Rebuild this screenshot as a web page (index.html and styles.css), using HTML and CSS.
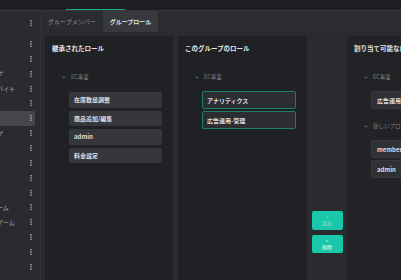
FILE: index.html
```html
<!DOCTYPE html>
<html lang="ja">
<head>
    <meta charset="UTF-8">
    <meta name="viewport" content="width=device-width, initial-scale=1.0">
    <title>グループロール</title>
    <link rel="stylesheet" href="styles.css">
</head>
<body>
    <div class="topbar"><span class="topbar-active"></span></div>

    <div class="layout">
        <!-- group list -->
        <aside class="sidebar">
            <div class="side-row side-head"><span class="side-name">グループ</span><svg class="kebab" viewBox="0 0 2 6"><rect x="0.3" y="0" width="1.4" height="1.3"/><rect x="0.3" y="2.3" width="1.4" height="1.3"/><rect x="0.3" y="4.6" width="1.4" height="1.3"/></svg></div>
            <div class="side-row"><span class="side-name">全社員</span><svg class="kebab" viewBox="0 0 2 6"><rect x="0.3" y="0" width="1.4" height="1.3"/><rect x="0.3" y="2.3" width="1.4" height="1.3"/><rect x="0.3" y="4.6" width="1.4" height="1.3"/></svg></div>
            <div class="side-row"><span class="side-name">管理者</span><svg class="kebab" viewBox="0 0 2 6"><rect x="0.3" y="0" width="1.4" height="1.3"/><rect x="0.3" y="2.3" width="1.4" height="1.3"/><rect x="0.3" y="4.6" width="1.4" height="1.3"/></svg></div>
            <div class="side-row"><span class="side-name">開発グループ</span><svg class="kebab" viewBox="0 0 2 6"><rect x="0.3" y="0" width="1.4" height="1.3"/><rect x="0.3" y="2.3" width="1.4" height="1.3"/><rect x="0.3" y="4.6" width="1.4" height="1.3"/></svg></div>
            <div class="side-row"><span class="side-name">学生・アルバイト</span><svg class="kebab" viewBox="0 0 2 6"><rect x="0.3" y="0" width="1.4" height="1.3"/><rect x="0.3" y="2.3" width="1.4" height="1.3"/><rect x="0.3" y="4.6" width="1.4" height="1.3"/></svg></div>
            <div class="side-row"><span class="side-name">営業部</span><svg class="kebab" viewBox="0 0 2 6"><rect x="0.3" y="0" width="1.4" height="1.3"/><rect x="0.3" y="2.3" width="1.4" height="1.3"/><rect x="0.3" y="4.6" width="1.4" height="1.3"/></svg></div>
            <div class="side-row is-selected"><span class="side-name">EC事業</span><svg class="kebab" viewBox="0 0 2 6"><rect x="0.3" y="0" width="1.4" height="1.3"/><rect x="0.3" y="2.3" width="1.4" height="1.3"/><rect x="0.3" y="4.6" width="1.4" height="1.3"/></svg></div>
            <div class="side-row"><span class="side-name">企画グループ</span><svg class="kebab" viewBox="0 0 2 6"><rect x="0.3" y="0" width="1.4" height="1.3"/><rect x="0.3" y="2.3" width="1.4" height="1.3"/><rect x="0.3" y="4.6" width="1.4" height="1.3"/></svg></div>
            <div class="side-row"><span class="side-name">デザイン</span><svg class="kebab" viewBox="0 0 2 6"><rect x="0.3" y="0" width="1.4" height="1.3"/><rect x="0.3" y="2.3" width="1.4" height="1.3"/><rect x="0.3" y="4.6" width="1.4" height="1.3"/></svg></div>
            <div class="side-row"><span class="side-name">人事部</span><svg class="kebab" viewBox="0 0 2 6"><rect x="0.3" y="0" width="1.4" height="1.3"/><rect x="0.3" y="2.3" width="1.4" height="1.3"/><rect x="0.3" y="4.6" width="1.4" height="1.3"/></svg></div>
            <div class="side-row"><span class="side-name">経理部</span><svg class="kebab" viewBox="0 0 2 6"><rect x="0.3" y="0" width="1.4" height="1.3"/><rect x="0.3" y="2.3" width="1.4" height="1.3"/><rect x="0.3" y="4.6" width="1.4" height="1.3"/></svg></div>
            <div class="side-row"><span class="side-name">サポート</span><svg class="kebab" viewBox="0 0 2 6"><rect x="0.3" y="0" width="1.4" height="1.3"/><rect x="0.3" y="2.3" width="1.4" height="1.3"/><rect x="0.3" y="4.6" width="1.4" height="1.3"/></svg></div>
            <div class="side-row"><span class="side-name">ブラウザゲーム</span><svg class="kebab" viewBox="0 0 2 6"><rect x="0.3" y="0" width="1.4" height="1.3"/><rect x="0.3" y="2.3" width="1.4" height="1.3"/><rect x="0.3" y="4.6" width="1.4" height="1.3"/></svg></div>
            <div class="side-row"><span class="side-name">ソーシャルゲーム</span><svg class="kebab" viewBox="0 0 2 6"><rect x="0.3" y="0" width="1.4" height="1.3"/><rect x="0.3" y="2.3" width="1.4" height="1.3"/><rect x="0.3" y="4.6" width="1.4" height="1.3"/></svg></div>
            <div class="side-row"><span class="side-name">広報</span><svg class="kebab" viewBox="0 0 2 6"><rect x="0.3" y="0" width="1.4" height="1.3"/><rect x="0.3" y="2.3" width="1.4" height="1.3"/><rect x="0.3" y="4.6" width="1.4" height="1.3"/></svg></div>
            <div class="side-row"><span class="side-name">外部委託</span><svg class="kebab" viewBox="0 0 2 6"><rect x="0.3" y="0" width="1.4" height="1.3"/><rect x="0.3" y="2.3" width="1.4" height="1.3"/><rect x="0.3" y="4.6" width="1.4" height="1.3"/></svg></div>
            <div class="side-row"><span class="side-name">テスト</span><svg class="kebab" viewBox="0 0 2 6"><rect x="0.3" y="0" width="1.4" height="1.3"/><rect x="0.3" y="2.3" width="1.4" height="1.3"/><rect x="0.3" y="4.6" width="1.4" height="1.3"/></svg></div>
        </aside>

        <main class="content">
            <nav class="tabs">
                <div class="tab">グループメンバー</div>
                <div class="tab tab-active">グループロール</div>
            </nav>

            <div class="panels">
                <!-- inherited roles -->
                <section class="panel">
                    <div class="panel-title">継承されたロール</div>
                    <div class="group">
                        <div class="group-label"><svg class="chevron" viewBox="0 0 4 3"><path d="M0.4 0.6 L2 2.2 L3.6 0.6"/></svg>EC事業</div>
                        <div class="role-list">
                            <div class="role">在庫数量調整</div>
                            <div class="role">商品追加/編集</div>
                            <div class="role">admin</div>
                            <div class="role">料金設定</div>
                        </div>
                    </div>
                </section>

                <!-- roles of this group -->
                <section class="panel panel-own">
                    <div class="panel-title">このグループのロール</div>
                    <div class="group">
                        <div class="group-label"><svg class="chevron" viewBox="0 0 4 3"><path d="M0.4 0.6 L2 2.2 L3.6 0.6"/></svg>EC事業</div>
                        <div class="role-list">
                            <div class="role role-own">アナリティクス</div>
                            <div class="role role-own">広告運用-管理</div>
                        </div>
                    </div>
                </section>

                <div class="transfer">
                    <button class="move-btn is-muted"><span>&lt;</span><span>追加</span></button>
                    <button class="move-btn"><span>&gt;</span><span>削除</span></button>
                </div>

                <!-- assignable roles -->
                <section class="panel panel-free">
                    <div class="panel-title">割り当て可能なロール</div>
                    <div class="group">
                        <div class="group-label"><svg class="chevron" viewBox="0 0 4 3"><path d="M0.4 0.6 L2 2.2 L3.6 0.6"/></svg>EC事業</div>
                        <div class="role-list">
                            <div class="role role-free">広告運用-閲覧</div>
                        </div>
                    </div>
                    <div class="group">
                        <div class="group-label"><svg class="chevron" viewBox="0 0 4 3"><path d="M0.4 0.6 L2 2.2 L3.6 0.6"/></svg>新しいプロジェクト</div>
                        <div class="role-list">
                            <div class="role role-free">member</div>
                            <div class="role role-free">admin</div>
                        </div>
                    </div>
                </section>
            </div>
        </main>
    </div>
</body>
</html>
```

FILE: styles.css
```css
html, body {
    margin: 0;
    height: 100%;
    overflow: hidden;
}
body {
    background-color: #2a2b2f;
    font-family: "Noto Sans CJK JP", "Noto Sans", sans-serif;
    color: #dedfe2;
}
.topbar {
    height: 10px;
    background-color: #1e1f23;
    display: flex;
    align-items: flex-end;
}
.topbar-active {
    margin-left: 66px;
    width: 59px;
    height: 1px;
    background-color: #1aa88e;
}
.layout {
    display: flex;
    height: 270px;
    border-top: 1px solid #36373b;
}
.sidebar {
    flex: none;
    width: 40px;
    padding-top: 4.5px;
    background-color: #2a2b30;
    border-right: 1px solid #313236;
    overflow: hidden;
}
.side-row {
    display: flex;
    align-items: center;
    height: 14.87px;
    margin: 0 5px 0 -33px;
    padding-right: 3px;
    border-radius: 2px;
}
.side-head {
    margin-bottom: 6.2px;
}
.side-row.is-selected {
    background-color: #45464b;
}
.side-name {
    flex: 1;
    min-width: 0;
    overflow: hidden;
    white-space: nowrap;
    font-size: 6px;
    color: #a9aaae;
}
.kebab {
    flex: none;
    width: 2px;
    height: 6px;
    fill: #b4b5b9;
}
.content {
    flex: 1;
    min-width: 0;
    display: flex;
    flex-direction: column;
}
.tabs {
    flex: none;
    display: flex;
    height: 21px;
    background-color: #2b2c30;
}
.tab {
    padding: 0 7px;
    font-size: 6px;
    line-height: 21px;
    color: #9a9b9f;
    white-space: nowrap;
}
.tab-active {
    background-color: #38393d;
    color: #e6e6e8;
    font-weight: bold;
}
.panels {
    flex: none;
    display: flex;
    height: 392px;
    padding: 4px 0 0 4px;
}
.panel {
    flex: none;
    box-sizing: border-box;
    width: 128px;
    padding: 7px 11px 0 7px;
    background-color: #202125;
}
.panel-own {
    width: 129px;
    margin-left: 5px;
}
.panel-free {
    width: 129px;
    background-color: #222327;
}
.panel-title {
    height: 10px;
    line-height: 10px;
    font-size: 6.5px;
    font-weight: bold;
    color: #e6e6e8;
    white-space: nowrap;
}
.group {
    margin-top: 19px;
}
.group + .group {
    margin-top: 12px;
}
.group-label {
    display: flex;
    align-items: center;
    gap: 5px;
    height: 10px;
    padding-left: 10px;
    font-size: 5.5px;
    color: #7d7e83;
    white-space: nowrap;
}
.chevron {
    flex: none;
    width: 4px;
    height: 3px;
    fill: none;
    stroke: #8a8b90;
    stroke-width: 0.7;
}
.role-list {
    display: flex;
    flex-direction: column;
    gap: 3px;
    margin: 10px 0 0 17px;
}
.role {
    display: flex;
    align-items: center;
    box-sizing: border-box;
    height: 15.6px;
    padding: 0 5px;
    background-color: #36373b;
    border-radius: 2px;
    font-size: 6px;
    font-weight: 600;
    color: #dedfe2;
    white-space: nowrap;
}
.panel-own .role-list,
.panel-free .role-list {
    gap: 2px;
    margin-top: 9px;
}
.role-own {
    height: 18px;
    padding: 0 4px;
    background-color: #2c2d31;
    border: 1px solid #1e7d6b;
}
.role-free {
    height: 18px;
    padding: 0 5px;
    background-color: #303135;
    border: 1px solid #38393d;
}
.transfer {
    flex: none;
    width: 40px;
    display: flex;
    flex-direction: column;
    align-items: center;
    justify-content: center;
    gap: 5px;
}
.move-btn {
    display: flex;
    flex-direction: column;
    align-items: center;
    justify-content: center;
    width: 31px;
    height: 18.5px;
    padding: 0;
    border: none;
    border-radius: 2px;
    background-color: #19c8aa;
    font-family: inherit;
    font-size: 5px;
    line-height: 6px;
    color: #effffb;
}
.move-btn.is-muted {
    color: #8fe0d1;
}
```
